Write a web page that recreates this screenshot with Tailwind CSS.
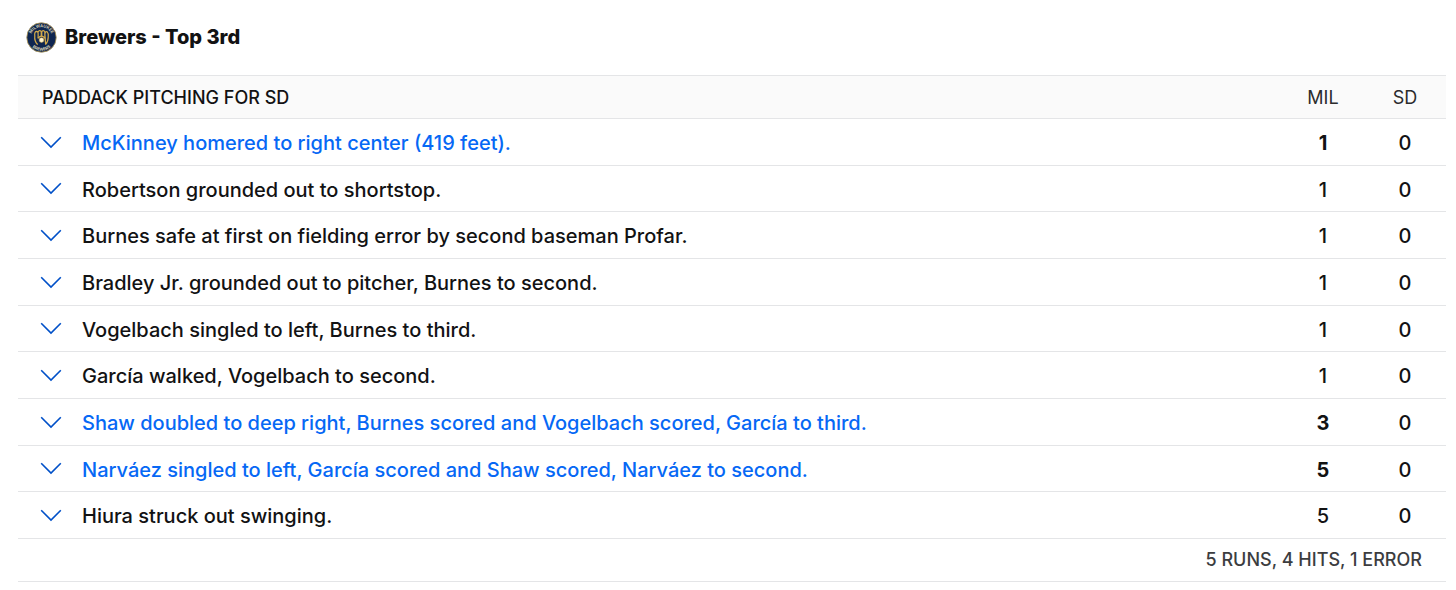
<!DOCTYPE html>
<html lang="en">
<head>
  <meta charset="UTF-8" />
  <meta name="viewport" content="width=device-width, initial-scale=1" />
  <title>Brewers - Top 3rd</title>
  <script src="https://cdn.jsdelivr.net/npm/@tailwindcss/browser@4"></script>
</head>
<body class="bg-white font-['Inter',sans-serif] text-[#121213]">

  <!-- Chevron shared by every play -->
  <svg class="hidden" aria-hidden="true">
    <symbol id="chevron" viewBox="0 0 22 13">
      <path d="M1.2 1.2 L11 11 L20.8 1.2" fill="none" stroke="currentColor" stroke-width="1.6" />
    </symbol>
  </svg>

  <main class="pl-[18px] pr-[10px]">
    <!-- Half inning heading -->
    <header class="flex items-center gap-2 h-[74px] pl-2">
      <svg class="size-[31px] shrink-0" viewBox="0 0 60 60" aria-hidden="true">
        <defs>
          <path id="arcTop" d="M9 31 A21 21 0 0 1 51 31" />
          <path id="arcBottom" d="M3.5 29 A26.5 26.5 0 0 0 56.5 29" />
        </defs>
        <circle cx="30" cy="30" r="28.5" fill="#0f2650" stroke="#b39a58" stroke-width="1.6" />
        <g fill="#d9d2b4" class="text-[8px] font-bold" text-anchor="middle">
          <text><textPath href="#arcTop" startOffset="50%">MILWAUKEE</textPath></text>
          <text><textPath href="#arcBottom" startOffset="50%">BREWERS</textPath></text>
        </g>
        <!-- Glove: four fingers, thumb, and the ball in the pocket -->
        <g fill="none" stroke="#d2a94a" stroke-width="2.4" stroke-linejoin="round" stroke-linecap="round">
          <path d="M22 43 Q16 37 17 27 Q16 19 20 18 Q24 18 23.500 24 V30 M23.500 19 Q26 15 29.500 18.500 V27 M30.500 27 V18.500 Q34 15 36.500 19 V29 M36.500 24 Q37 18 41 19 Q44 22 43 29 Q43 38 38 43 Z" />
          <path d="M23.500 31 Q30 24 36.500 31" />
        </g>
        <circle cx="30" cy="35" r="4.600" fill="#fff4cf" stroke="#d2a94a" stroke-width="1" />
      </svg>
      <h1 class="text-[20px] leading-6 font-extrabold">Brewers - Top 3rd</h1>
    </header>

    <!-- Play by play -->
    <table class="mt-px w-full table-fixed border-separate border-spacing-0 text-[20px] leading-6 font-medium [&_td]:border-b [&_td]:border-[#e4e5e7] [&_th]:border-y [&_th]:border-[#e4e5e7]">
      <colgroup>
        <col class="w-[64px]" />
        <col />
        <col class="w-[82px]" />
        <col class="w-[82px]" />
      </colgroup>
      <thead class="bg-[#fafafa] text-[18px]">
        <tr class="h-11">
          <th colspan="2" scope="col" class="pl-6 pt-0.5 text-left font-medium">PADDACK PITCHING FOR SD</th>
          <th scope="col" class="pt-0.5 text-center font-normal text-[#2b2c2d]">MIL</th>
          <th scope="col" class="pt-0.5 text-center font-normal text-[#2b2c2d]">SD</th>
        </tr>
      </thead>
      <tbody class="[&_tr]:h-[47px] [&_tr:nth-child(3n+2)]:h-[46px] [&_td+td]:pt-0.5 [&_button]:block [&_button]:ml-[22px] [&_button]:text-[#0050c8] [&_svg]:w-[22px] [&_svg]:h-[13px]">
        <tr>
          <td><button type="button" aria-label="Show pitches to McKinney"><svg><use href="#chevron" /></svg></button></td>
          <td class="text-[#0668f5]">McKinney homered to right center (419 feet).</td>
          <td class="text-center font-bold">1</td>
          <td class="text-center">0</td>
        </tr>
        <tr>
          <td><button type="button" aria-label="Show pitches to Robertson"><svg><use href="#chevron" /></svg></button></td>
          <td>Robertson grounded out to shortstop.</td>
          <td class="text-center">1</td>
          <td class="text-center">0</td>
        </tr>
        <tr>
          <td><button type="button" aria-label="Show pitches to Burnes"><svg><use href="#chevron" /></svg></button></td>
          <td>Burnes safe at first on fielding error by second baseman Profar.</td>
          <td class="text-center">1</td>
          <td class="text-center">0</td>
        </tr>
        <tr>
          <td><button type="button" aria-label="Show pitches to Bradley Jr."><svg><use href="#chevron" /></svg></button></td>
          <td>Bradley Jr. grounded out to pitcher, Burnes to second.</td>
          <td class="text-center">1</td>
          <td class="text-center">0</td>
        </tr>
        <tr>
          <td><button type="button" aria-label="Show pitches to Vogelbach"><svg><use href="#chevron" /></svg></button></td>
          <td>Vogelbach singled to left, Burnes to third.</td>
          <td class="text-center">1</td>
          <td class="text-center">0</td>
        </tr>
        <tr>
          <td><button type="button" aria-label="Show pitches to García"><svg><use href="#chevron" /></svg></button></td>
          <td>García walked, Vogelbach to second.</td>
          <td class="text-center">1</td>
          <td class="text-center">0</td>
        </tr>
        <tr>
          <td><button type="button" aria-label="Show pitches to Shaw"><svg><use href="#chevron" /></svg></button></td>
          <td class="text-[#0668f5]">Shaw doubled to deep right, Burnes scored and Vogelbach scored, García to third.</td>
          <td class="text-center font-bold">3</td>
          <td class="text-center">0</td>
        </tr>
        <tr>
          <td><button type="button" aria-label="Show pitches to Narváez"><svg><use href="#chevron" /></svg></button></td>
          <td class="text-[#0668f5]">Narváez singled to left, García scored and Shaw scored, Narváez to second.</td>
          <td class="text-center font-bold">5</td>
          <td class="text-center">0</td>
        </tr>
        <tr>
          <td><button type="button" aria-label="Show pitches to Hiura"><svg><use href="#chevron" /></svg></button></td>
          <td>Hiura struck out swinging.</td>
          <td class="text-center">5</td>
          <td class="text-center">0</td>
        </tr>
      </tbody>
      <tfoot class="text-[18px] text-[#3c3d3f]">
        <tr class="h-[43px]">
          <td colspan="4" class="pr-6 text-right">5 RUNS, 4 HITS, 1 ERROR</td>
        </tr>
      </tfoot>
    </table>
  </main>
</body>
</html>
